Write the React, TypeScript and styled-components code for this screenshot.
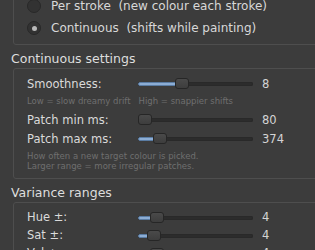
import React from "react";
import styled, { createGlobalStyle } from "styled-components";

const GlobalStyle = createGlobalStyle`
  html, body {
    margin: 0;
    padding: 0;
    background: #3c3c3c;
    overflow: hidden;
  }
  body {
    font-family: "DejaVu Sans", "Liberation Sans", sans-serif;
  }
`;

// panel is scrolled a little, the first group sits partly above the top edge
const Page = styled.div`
  width: 345px;
  margin-top: -14px;
  padding-left: 13px;
  box-sizing: border-box;
  color: #d9d9d9;
`;

const GroupBox = styled.div<{ $pad: string }>`
  border: 1px solid #4e4e4e;
  border-radius: 3px;
  padding: ${(p) => p.$pad};
`;

const GroupTitle = styled.div`
  margin: 6px 0 1px -2px;
  height: 16px;
  line-height: 16px;
  font-size: 12.5px;
  color: #dedede;
`;

const RadioRow = styled.div`
  display: flex;
  align-items: center;
  gap: 10px;
  height: 22px;
  font-size: 12px;
  white-space: pre;
  color: #d8d8d8;
`;

const RadioDot = styled.span<{ $on?: boolean }>`
  width: 14px;
  height: 14px;
  box-sizing: border-box;
  border-radius: 50%;
  background: #323232;
  border: 1px solid #282828;
  display: flex;
  align-items: center;
  justify-content: center;

  &::after {
    content: "";
    width: 5px;
    height: 5px;
    border-radius: 50%;
    background: ${(p) => (p.$on ? "#b9b9b9" : "transparent")};
  }
`;

const SliderRow = styled.div<{ $h: number }>`
  display: grid;
  grid-template-columns: 111px 115px auto;
  align-items: center;
  height: ${(p) => p.$h}px;
`;

const Label = styled.span`
  font-size: 11.5px;
  color: #dadada;
`;

const Value = styled.span`
  margin-left: 9px;
  font-size: 11.5px;
  color: #d4d4d4;
`;

const Track = styled.div`
  position: relative;
  height: 11px;
`;

const Groove = styled.div`
  position: absolute;
  left: 0;
  right: 0;
  top: 4px;
  height: 4px;
  border-radius: 2px;
  background: #2c2c2c;
  box-shadow: inset 0 0 0 1px #292929;
`;

const Fill = styled.div`
  position: absolute;
  left: 0;
  top: 4px;
  height: 4px;
  box-sizing: border-box;
  border-radius: 2px;
  background: #8cadd4;
  border: 1px solid #5a7ca3;
`;

const Handle = styled.div`
  position: absolute;
  top: 0;
  width: 14px;
  height: 11px;
  box-sizing: border-box;
  border-radius: 3px;
  border: 1px solid #262626;
  background: linear-gradient(#4a4a4a, #3d3d3d);
`;

const Hint = styled.div<{ $h: number }>`
  font-size: 8.5px;
  line-height: ${(p) => p.$h}px;
  color: #6f6f6f;
  white-space: pre;
`;

const HintBlock = styled.div`
  margin-top: 3px;
`;

interface SliderProps {
  label: string;
  value: string;
  pos: number; // fraction of travel 0..1
  h: number;
}

const TRAVEL = 101;

function Slider({ label, value, pos, h }: SliderProps) {
  const x = Math.round(pos * TRAVEL);
  return (
    <SliderRow $h={h}>
      <Label>{label}</Label>
      <Track>
        <Groove />
        {x > 0 && <Fill style={{ width: x + 2 }} />}
        <Handle style={{ left: x }} />
      </Track>
      <Value>{value}</Value>
    </SliderRow>
  );
}

export default function App() {
  return (
    <>
      <GlobalStyle />
      <Page>
        <GroupBox $pad="8px 0 5px 13px">
          <RadioRow>
            <RadioDot />
            {"Per stroke  (new colour each stroke)"}
          </RadioRow>
          <RadioRow>
            <RadioDot $on />
            {"Continuous  (shifts while painting)"}
          </RadioRow>
        </GroupBox>

        <GroupTitle>Continuous settings</GroupTitle>
        <GroupBox $pad="5px 0 7px 13px">
          <Slider label="Smoothness:" value="8" pos={0.366} h={19} />
          <Hint $h={17}>{"Low = slow dreamy drift   High = snappier shifts"}</Hint>
          <Slider label="Patch min ms:" value="80" pos={0} h={19} />
          <Slider label="Patch max ms:" value="374" pos={0.149} h={19} />
          <HintBlock>
            <Hint $h={10}>How often a new target colour is picked.</Hint>
            <Hint $h={10}>Larger range = more irregular patches.</Hint>
          </HintBlock>
        </GroupBox>

        <GroupTitle>Variance ranges</GroupTitle>
        <GroupBox $pad="5px 0 7px 13px">
          <Slider label="Hue ±:" value="4" pos={0.12} h={18} />
          <Slider label="Sat ±:" value="4" pos={0.09} h={18} />
          <Slider label="Val ±:" value="4" pos={0.12} h={18} />
        </GroupBox>
      </Page>
    </>
  );
}
